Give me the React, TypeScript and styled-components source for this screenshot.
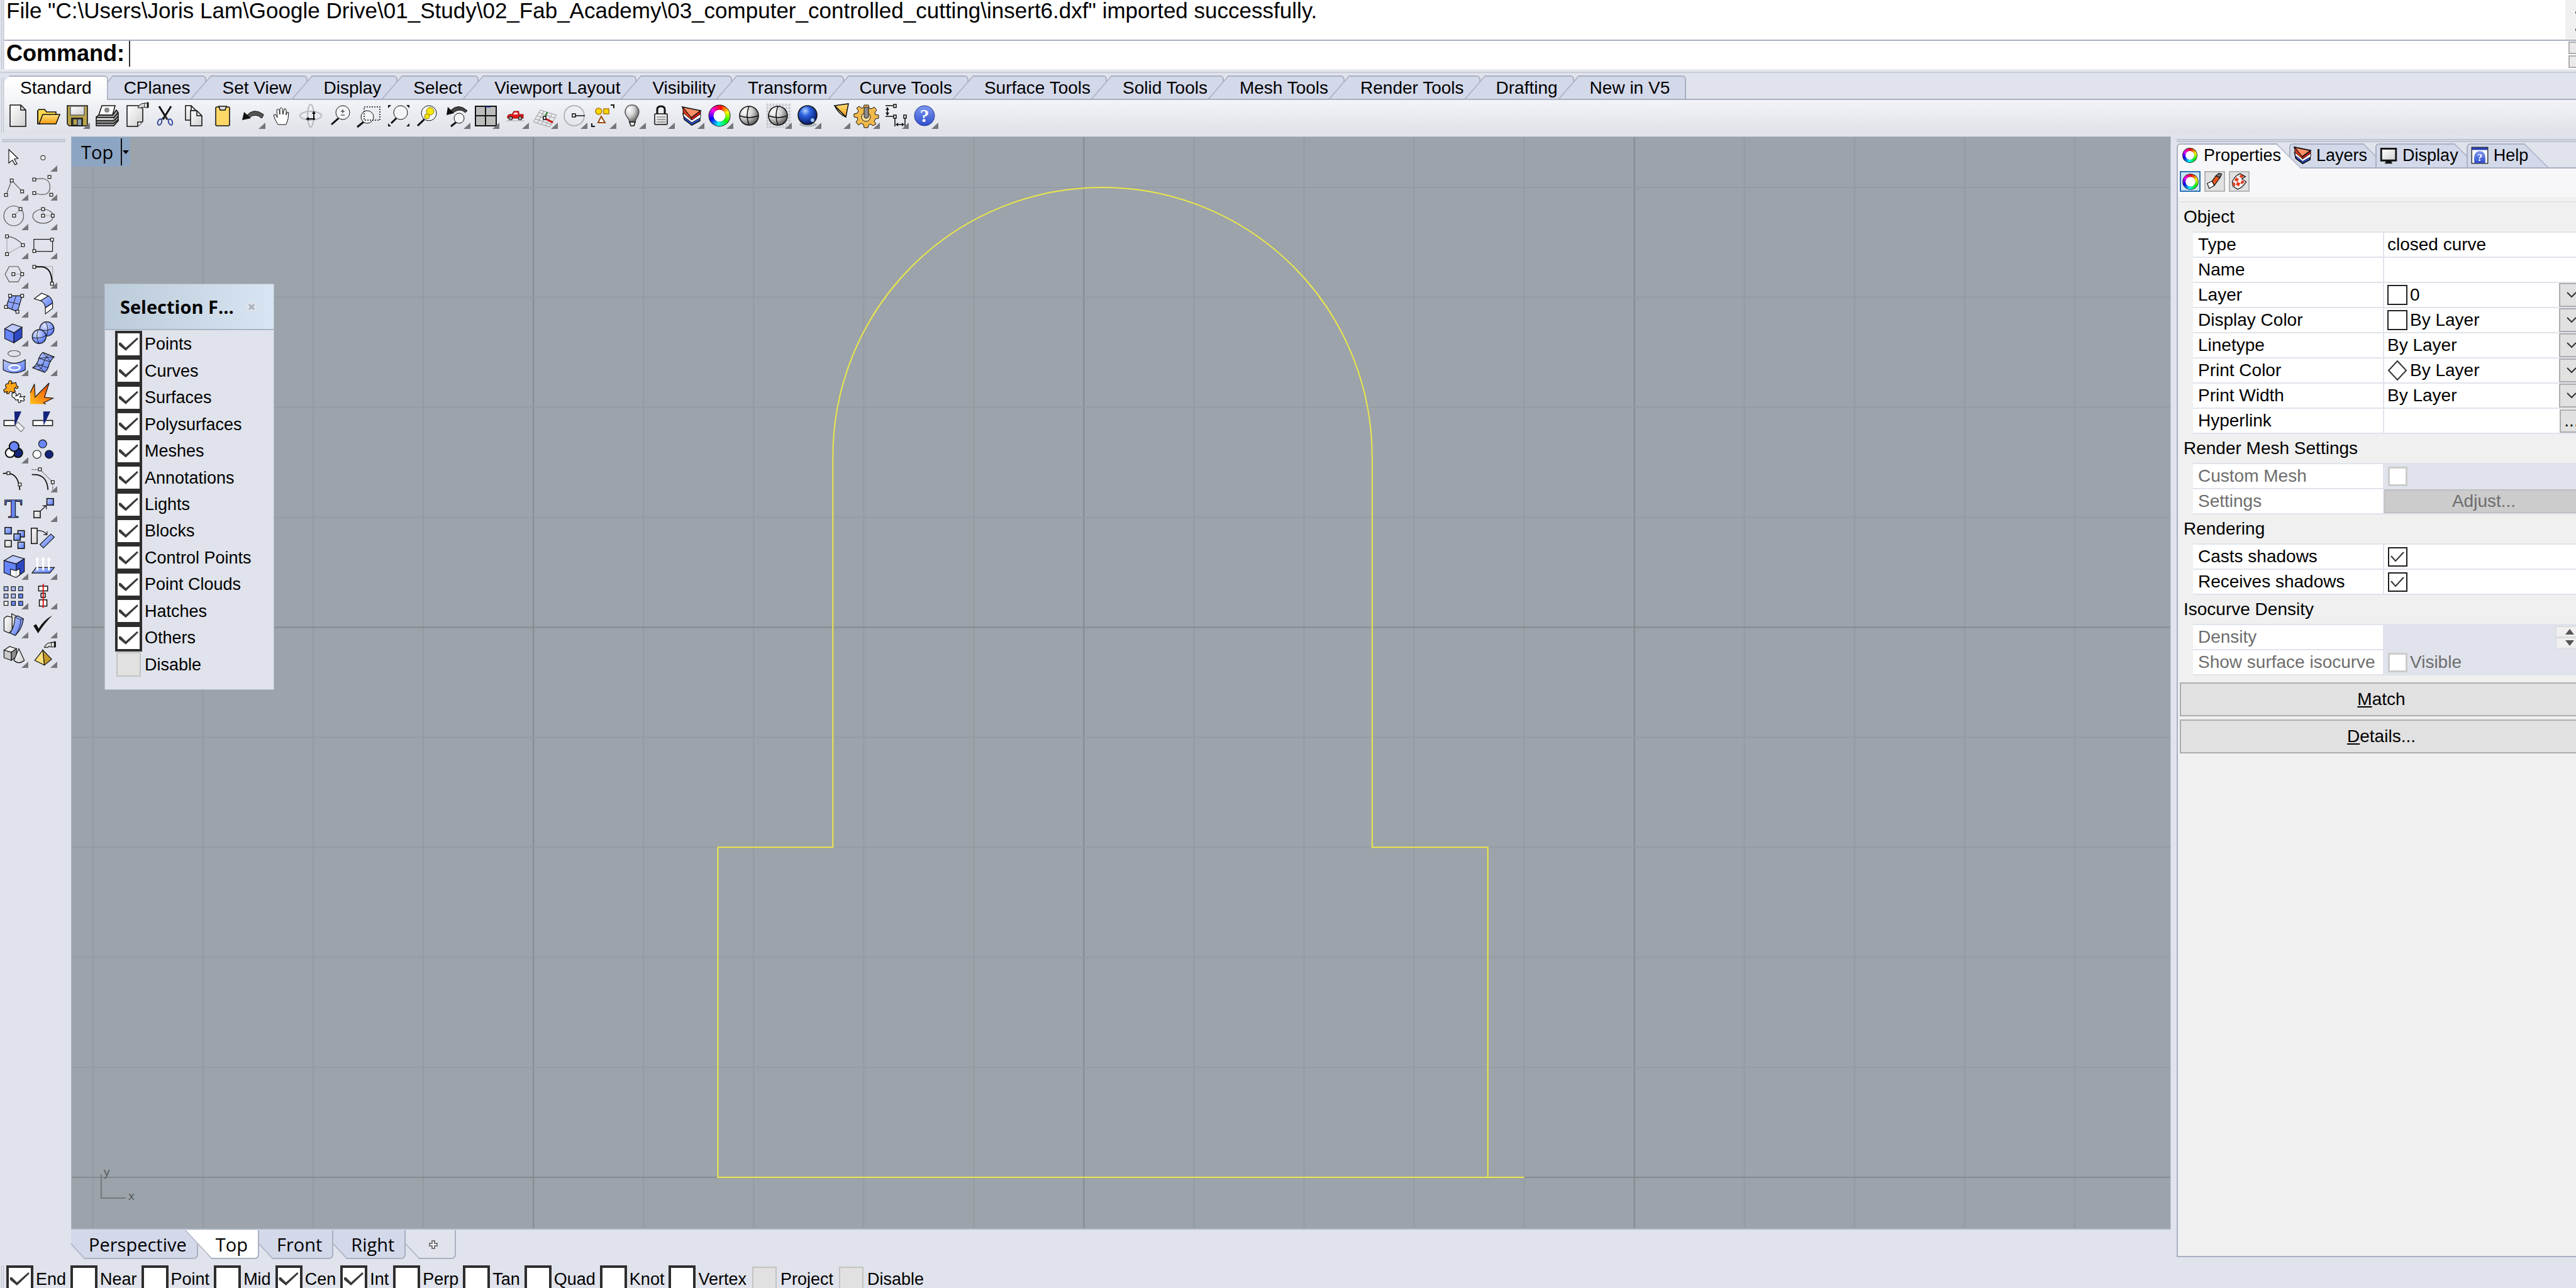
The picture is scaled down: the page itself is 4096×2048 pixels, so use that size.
import React, { ReactNode } from "react";
import styled, { createGlobalStyle, css } from "styled-components";

const color = {
  chrome: "#e0e3eb",
  tab: "#d4d9ea",
  line: "#a9b0c2",
  softLine: "#bcc2cf",
  ink: "#000000",
  muted: "#6d6d6d",
  viewport: "#9ca3aa",
  face: "#e1e1e1",
  blue: "#6a86fb",
  paleBlue: "#b9c7ff",
  navy: "#13247a",
};

const sans = `"Liberation Sans", Arial, sans-serif`;
const ui = `"Open Sans", "Noto Sans", sans-serif`;

const Global = createGlobalStyle`
  *, *::before, *::after { box-sizing: border-box; }
  html, body { margin: 0; height: 100%; overflow: hidden; }
  body { background: ${color.chrome}; font-family: ${sans}; font-size: 27px; line-height: 32px; color: ${color.ink}; }
  #root { height: 100%; }
  button, input, select { font: inherit; color: inherit; margin: 0; padding: 0; border: 0; background: none; border-radius: 0; }
  svg { display: block; }
`;

/* ---------- page frame ---------- */

const Page = styled.div`
  display: flex;
  flex-direction: column;
  height: 100vh;
  overflow: hidden;
`;

const Grip = styled.div<{ $horizontal?: boolean }>`
  flex: none;
  ${(p) =>
    p.$horizontal
      ? css`
          height: 5px;
          margin: 4px 9px 3px 3px;
          border-top: 2px solid ${color.softLine};
          border-bottom: 2px solid ${color.softLine};
        `
      : css`
          width: 4px;
          margin: 0 0 0 2px;
          border-left: 1px solid ${color.softLine};
          border-right: 1px solid ${color.softLine};
        `}
`;

const CommandDock = styled.section`
  flex: none;
  display: flex;
  border-bottom: 0;
`;

const CommandBody = styled.div`
  flex: 1;
  margin-left: 1px;
  background: #fff;
`;

const HistoryRow = styled.div`
  display: flex;
  height: 65px;
  border-bottom: 2px solid ${color.line};
`;

const History = styled.p`
  flex: 1;
  margin: 0;
  padding-left: 3px;
  font-size: 35px;
  line-height: 34px;
  white-space: nowrap;
`;

const ScrollTrack = styled.div`
  width: 17px;
  background: #f0f0f0;
  overflow: hidden;
  padding: 12px 0 0 16px;
`;

const PromptRow = styled.div`
  display: flex;
  height: 45px;
  padding-left: 3px;
`;

const PromptLabel = styled.label`
  font-size: 36px;
  font-weight: bold;
  line-height: 40px;
`;

const Caret = styled.span`
  width: 2px;
  height: 41px;
  margin-left: 7px;
  background: #333;
`;

const PromptInput = styled.input`
  flex: 1;
  outline: none;
  font-size: 36px;
`;

const PromptSpin = styled.div`
  display: grid;
  gap: 2px;
  padding: 1px 0 2px;
`;

const SpinHalf = styled.button`
  width: 12px;
  background: #eaeaea;
  border: 2px solid #adadad;
  border-right: 0;
`;

/* ---------- toolbar tabs ---------- */

const RibbonDock = styled.section`
  flex: none;
  display: flex;
  border-top: 4px solid #e6e8ef;
  margin-bottom: 6px;
  box-shadow: inset 0 2px 0 #c8ccd8;
`;

const RibbonBody = styled.div`
  flex: 1;
  margin-left: 1px;
  padding-top: 6px;
`;

const RibbonGrip = styled(Grip)`
  margin-top: 9px;
`;

const RibbonTabs = styled.div`
  display: flex;
  height: 39px;
  border-bottom: 2px solid ${color.line};
`;

const RibbonTab = styled.button<{ $active?: boolean }>`
  position: relative;
  isolation: isolate;
  height: 37px;
  padding: 2px 26px 0 25px;
  font-size: 28px;
  white-space: nowrap;

  &::before,
  &::after {
    content: "";
    position: absolute;
    z-index: -1;
    top: 0;
    bottom: 0;
    background: ${color.tab};
    border-top: 2px solid ${color.line};
  }
  &::before {
    left: -9px;
    width: 56px;
    border-left: 2px solid ${color.line};
    transform: skewX(-41deg);
  }
  &::after {
    left: 18px;
    right: 0;
    border-right: 2px solid ${color.line};
    border-top-right-radius: 6px;
  }

  ${(p) =>
    p.$active &&
    css`
      z-index: 2;
      height: 39px;
      padding-bottom: 2px;
      clip-path: polygon(8px 0, 100% 0, 100% 100%, 0 100%, 0 10px);
      &::before {
        display: none;
      }
      &::after {
        left: 0;
        background: linear-gradient(#ffffff, #f5f6f9);
      }
    `}
`;

const ToolStrip = styled.div`
  display: flex;
  height: 52px;
  background: linear-gradient(#f3f4f8, #dfe2e8);
`;

const StripGrid = styled.div`
  display: grid;
  grid-template-columns: repeat(32, 1fr);
  width: 1488px;
  margin-left: -2px;
  padding-top: 2px;
`;

const ToolButton = styled.button`
  display: block;
  width: 46px;
  height: 46px;
`;

/* ---------- middle ---------- */

const Middle = styled.main`
  flex: 1;
  min-height: 0;
  display: flex;
`;

const SideTools = styled.aside`
  flex: none;
  width: 113px;
`;

const SideGrid = styled.div`
  display: grid;
  grid-template-columns: 46px 46px;
  grid-auto-rows: 1fr;
  height: 835px;
`;

const ViewColumn = styled.section`
  flex: 1;
  min-width: 0;
  display: flex;
  flex-direction: column;
`;

const Viewport = styled.div`
  position: relative;
  flex: 1;
  min-height: 0;
  overflow: hidden;
  background: ${color.viewport};
  border: 1px solid ${color.line};
  border-right-color: #c5cad8;
  border-bottom-width: 2px;
`;

const Drawing = styled.svg`
  position: absolute;
  left: 0;
  top: 0;
  width: 100%;
  height: 100%;
`;

const ViewTitle = styled.button`
  position: absolute;
  left: 0;
  top: 0;
  display: flex;
  align-items: center;
  height: 47px;
  padding: 0 2px 0 15px;
  background: #8ca5c2;
  font-family: ${ui};
  font-size: 29px;
  line-height: 46px;

  i {
    width: 2px;
    height: 43px;
    margin: 0 1px 0 12px;
    background: #111;
  }
`;

const ViewTabs = styled.nav`
  flex: none;
  display: flex;
  height: 57px;
  padding-top: 1px;
  overflow: hidden;
`;

const ViewTab = styled.button<{ $active?: boolean; $plain?: boolean; $order: number }>`
  position: relative;
  isolation: isolate;
  z-index: ${(p) => (p.$active ? 20 : p.$order)};
  height: 46px;
  padding: 0 18px 0 28px;
  font-family: ${ui};
  font-size: 29px;
  line-height: 46px;
  white-space: nowrap;
  --face: ${(p) => (p.$active ? "#ffffff" : p.$plain ? color.chrome : color.tab)};

  &::before,
  &::after {
    content: "";
    position: absolute;
    z-index: -1;
    top: 0;
    bottom: 0;
    background: var(--face);
    border-bottom: 2px solid ${color.line};
  }
  &::before {
    left: 0;
    width: 46px;
    border-left: 2px solid ${color.line};
    transform: skewX(43deg);
  }
  &::after {
    left: 24px;
    right: 0;
    border-right: 2px solid ${color.line};
    border-bottom-right-radius: 7px;
  }
`;

/* ---------- selection filter ---------- */

const FilterWindow = styled.section`
  position: absolute;
  left: 52px;
  top: 233px;
  width: 270px;
  padding-bottom: 18px;
  background: ${color.chrome};
  border: 1px solid #b4bccb;
`;

const FilterTitle = styled.header`
  display: flex;
  align-items: center;
  justify-content: space-between;
  height: 73px;
  padding: 0 26px 0 24px;
  background: linear-gradient(90deg, #bccbd9, #d8e5f2);
  border-bottom: 2px solid #a9b5c4;

  h2 {
    margin: 0;
    font: bold 29px/74px ${ui};
    white-space: nowrap;
  }
`;

const FilterList = styled.div`
  display: grid;
  grid-auto-rows: minmax(0, 1fr);
  height: 553px;
  padding: 1px 0 0 16px;
`;

const CheckLabel = styled.label`
  display: flex;
  align-items: center;
  gap: 4px;
  white-space: nowrap;
`;

const BoldCheck = styled.input<{ $flat?: boolean }>`
  appearance: none;
  flex: none;
  width: 43px;
  height: 43px;
  background: #fff;
  border: 4px solid #2e2e2e;

  &:checked::before {
    content: "";
    display: block;
    width: 35px;
    height: 35px;
    background: #3a3a3a;
    clip-path: polygon(2px 15px, 5px 15px, 13px 23px, 31px 7px, 33px 9px, 13px 28px, 2px 19px);
  }

  ${(p) =>
    p.$flat &&
    css`
      width: 39px;
      height: 39px;
      margin: 2px;
      background: ${color.face};
      border: 2px solid #c3c3c3;
    `}
`;

/* ---------- properties panel ---------- */

const Panel = styled.aside`
  flex: none;
  width: 635px;
  margin: 4px 0 13px 9px;
  display: flex;
  flex-direction: column;
  overflow: hidden;
`;

const PanelGrip = styled(Grip)`
  margin: 0 0 2px;
`;

const PanelTabs = styled.div`
  display: flex;
  flex: none;
  height: 40px;
  border-bottom: 2px solid ${color.line};
`;

const PanelTab = styled.button<{ $active?: boolean }>`
  position: relative;
  isolation: isolate;
  z-index: ${(p) => (p.$active ? 3 : 0)};
  display: flex;
  align-items: center;
  gap: 8px;
  height: ${(p) => (p.$active ? 40 : 38)}px;
  padding: 0 13px ${(p) => (p.$active ? 3 : 1)}px 7px;
  --face: ${(p) => (p.$active ? "#f7f7f9" : color.tab)};

  &::before,
  &::after {
    content: "";
    position: absolute;
    z-index: -1;
    top: 0;
    bottom: 0;
    background: var(--face);
    border-top: 2px solid ${color.line};
  }
  &::before {
    left: 0;
    right: 19px;
    border-left: 2px solid ${color.line};
    border-top-left-radius: 6px;
  }
  &::after {
    right: 0;
    width: 46px;
    border-right: 2px solid ${color.line};
    transform: skewX(45deg);
  }
`;

const PanelBody = styled.div`
  flex: 1;
  background: #f0f0f0;
  border-left: 2px solid ${color.line};
  border-bottom: 2px solid ${color.line};
`;

const PageButtons = styled.div`
  display: flex;
  gap: 6px;
  height: 45px;
  padding: 4px 0 0 3px;
  background: #f7f7f9;
`;

const PageButton = styled.button<{ $on?: boolean }>`
  display: grid;
  place-items: center;
  width: 33px;
  height: 33px;
  background: ${(p) => (p.$on ? "#cce4f7" : color.face)};
  border: 2px solid ${(p) => (p.$on ? "#2a6fb5" : "#b4b4b4")};
`;

const Sheet = styled.div`
  width: 645px;
  padding: 7px 0 0 2px;
`;

const Table = styled.table`
  width: 100%;
  border-collapse: collapse;
  table-layout: fixed;
  border-top: 2px solid ${color.chrome};
  font-size: 28px;
`;

const GroupHead = styled.th`
  height: 48px;
  padding: 0 0 0 7px;
  font-weight: normal;
  text-align: left;
`;

const Gutter = styled.td`
  width: 22px;
  padding: 0;
  background: #f0f0f0;
`;

const Name = styled.th<{ $off?: boolean }>`
  width: 303px;
  height: 40px;
  padding: 0 0 0 8px;
  background: #fff;
  border: 2px solid ${color.chrome};
  border-left: 0;
  color: ${(p) => (p.$off ? color.muted : color.ink)};
  font-weight: normal;
  text-align: left;
  white-space: nowrap;
`;

const Value = styled.td<{ $off?: boolean }>`
  padding: 0;
  background: ${(p) => (p.$off ? color.chrome : "#fff")};
  border: 2px solid ${color.chrome};
  border-right: 0;
  color: ${(p) => (p.$off ? color.muted : color.ink)};
`;

const ValueLine = styled.div`
  display: flex;
  align-items: center;
  gap: 4px;
  height: 38px;
  padding-left: 5px;
`;

const Swatch = styled.span`
  flex: none;
  width: 32px;
  height: 32px;
  background: #fff;
  border: 2px solid #222;
`;

const Select = styled.select`
  appearance: none;
  flex: 1;
  min-width: 0;
  height: 38px;
  outline: none;
`;

const DropFace = styled.span`
  display: grid;
  place-items: center;
  flex: none;
  width: 39px;
  height: 38px;
  background: ${color.face};
  border: 2px solid #adadad;
  pointer-events: none;
`;

const TextBox = styled.input`
  flex: 1;
  min-width: 0;
  height: 36px;
  outline: none;
`;

const MoreButton = styled.button`
  flex: none;
  width: 38px;
  height: 37px;
  background: ${color.face};
  border: 2px solid #adadad;
  line-height: 30px;
`;

const SmallCheck = styled.input`
  appearance: none;
  flex: none;
  width: 31px;
  height: 31px;
  margin-left: 1px;
  background: #fff;
  border: 2px solid #1c1c1c;

  &:disabled {
    border: 3px solid #cccccc;
  }
  &:checked::before {
    content: "";
    display: block;
    width: 27px;
    height: 27px;
    background: #333;
    clip-path: polygon(2px 13px, 4px 12px, 10px 19px, 22px 6px, 24px 7px, 10px 22px);
  }
`;

const AdjustButton = styled.button`
  display: block;
  width: 100%;
  height: 38px;
  background: #cccccc;
  border: 2px solid #bfbfbf;
`;

const Stepper = styled.div`
  display: grid;
  gap: 1px;
  width: 44px;
  margin-left: auto;
`;

const Step = styled.button`
  display: grid;
  place-items: center;
  height: 17px;
  background: #f0f0f0;
  border: 1px solid #d8d8d8;
`;

const WideButton = styled.button`
  display: block;
  width: 641px;
  height: 54px;
  margin: 0 0 5px 1px;
  background: ${color.face};
  border: 2px solid #adadad;
  font-size: 28px;
`;

const ButtonStack = styled.div`
  padding-top: 11px;
`;

/* ---------- object snaps ---------- */

const SnapBar = styled.footer`
  flex: none;
  display: flex;
  height: 36px;
`;

const SnapList = styled.div`
  display: flex;
  gap: 7px;
  height: 43px;
  padding-left: 4px;
`;

/* ---------- drawings ---------- */

const Corner = ({ size }: { size: number }) => {
  const k = size / 46;
  return <path d={`M${45 * k} ${34 * k}V${44 * k}H${34 * k}Z`} fill="#747679" />;
};

const Art = ({ size, box, menu, children }: { size: number; box: number; menu?: boolean; children: ReactNode }) => (
  <svg width={size} height={size} viewBox={`0 0 ${box} ${box}`} fill="none" stroke="#111" strokeWidth={box / 30} aria-hidden>
    {children}
    {menu && (
      <g stroke="none">
        <Corner size={box} />
      </g>
    )}
  </svg>
);

const Defs = styled.svg`
  position: absolute;
  width: 0;
  height: 0;
`;

const Gradients = () => (
  <Defs aria-hidden>
    <defs>
      <linearGradient id="paper" x1="0" y1="0" x2="1" y2="1">
        <stop offset="0" stopColor="#fff" />
        <stop offset="1" stopColor="#cfcfcf" />
      </linearGradient>
      <linearGradient id="gold" x1="0" y1="0" x2="0" y2="1">
        <stop offset="0" stopColor="#ffe27a" />
        <stop offset="1" stopColor="#f39a12" />
      </linearGradient>
      <linearGradient id="azure" x1="0" y1="0" x2="1" y2="1">
        <stop offset="0" stopColor="#c3d0ff" />
        <stop offset="1" stopColor="#5475f4" />
      </linearGradient>
      <linearGradient id="fire" x1="1" y1="0" x2="0" y2="1">
        <stop offset="0" stopColor="#f03a0c" />
        <stop offset="1" stopColor="#ffc21a" />
      </linearGradient>
      <linearGradient id="query" x1="0" y1="0" x2="0" y2="1">
        <stop offset="0" stopColor="#7d98f2" />
        <stop offset="1" stopColor="#2f4fcc" />
      </linearGradient>
      <radialGradient id="steel" cx="30%" cy="28%" r="85%">
        <stop offset="0" stopColor="#ffffff" />
        <stop offset="0.45" stopColor="#cfcfcf" />
        <stop offset="1" stopColor="#444" />
      </radialGradient>
      <radialGradient id="ocean" cx="38%" cy="28%" r="75%">
        <stop offset="0" stopColor="#b8d4ff" />
        <stop offset="0.35" stopColor="#2b62e0" />
        <stop offset="1" stopColor="#04135e" />
      </radialGradient>
      <radialGradient id="ball" cx="35%" cy="30%" r="75%">
        <stop offset="0" stopColor="#dfe6ff" />
        <stop offset="1" stopColor="#4d6ff0" />
      </radialGradient>
    </defs>
  </Defs>
);

const Wheel = ({ cx = 23, cy = 23, r = 13, w = 7 }: { cx?: number; cy?: number; r?: number; w?: number }) => {
  const n = 24;
  const at = (i: number) => {
    const a = (i / n) * Math.PI * 2 - Math.PI / 2;
    return `${(cx + r * Math.cos(a)).toFixed(2)} ${(cy + r * Math.sin(a)).toFixed(2)}`;
  };
  return (
    <g strokeWidth={w}>
      <circle cx={cx} cy={cy} r={r} strokeWidth={w + 2} stroke="#222" />
      {Array.from({ length: n }, (_, i) => (
        <path key={i} d={`M${at(i)}A${r} ${r} 0 0 1 ${at(i + 1.1)}`} stroke={`hsl(${i * 15} 95% 50%)`} />
      ))}
      <circle cx={cx} cy={cy} r={r - w / 2} fill="#fff" stroke="none" />
    </g>
  );
};

const LayerStack = () => (
  <>
    <path d="M11 20L13 29L25 38L38 31V24L25 31Z" fill="#2a4fd0" />
    <path d="M11 15L12 24L25 34L39 26V20L25 28Z" fill="#fff" strokeWidth={1} />
    <path d="M24 26L39 15V20L25 30Z" fill="#d81818" strokeWidth={1} />
    <path d="M10 9L39 15L24 26Z" fill="#ff8f66" />
    <path d="M10 9L12 19L25 30L24 26Z" fill="#e5381c" strokeWidth={1} />
  </>
);

const Lens = ({ x, y, r, hx, hy }: { x: number; y: number; r: number; hx: number; hy: number }) => (
  <>
    <path d={`M${x - r * 0.6} ${y + r * 0.8}L${hx} ${hy}`} strokeWidth={3} />
    <circle cx={x} cy={y} r={r} fill="#f4f5f8" strokeWidth={1} />
  </>
);

const Page46 = ({ x = 11, y = 6, w = 25, h = 34 }) => (
  <>
    <path d={`M${x} ${y}H${x + w - 8}L${x + w} ${y + 8}V${y + h}H${x}Z`} fill="url(#paper)" />
    <path d={`M${x + w - 8} ${y}V${y + 8}H${x + w}`} />
  </>
);

const Sphere = () => (
  <>
    <circle cx="23" cy="23" r="15" fill="url(#steel)" />
    <path d="M23 8Q17 22 23 38M8 23Q23 29 38 23" />
  </>
);

const Question = ({ size = 30, x = 23, y = 33 }) => (
  <text x={x} y={y} fontFamily="Liberation Serif, serif" fontWeight="bold" fontSize={size} textAnchor="middle" fill="#fff" stroke="none">
    ?
  </text>
);

const Fist = ({ x = 0, y = 0, k = 1 }) => (
  <g transform={`translate(${x} ${y}) scale(${k})`} strokeWidth={1}>
    <path d="M0 8L3 4L6 2L12 1V7L9 8L7 7L5 9L3 8L1 9Z" fill="#ddd" />
    <path d="M11 1H16V8H11Z" fill="#fff" />
    <path d="M15 0H17V8H15Z" fill="#111" />
  </g>
);

type Tool = { name: string; menu?: boolean; art: ReactNode };

const stripTools: Tool[] = [
  { name: "New", art: <Page46 /> },
  {
    name: "Open",
    art: (
      <>
        <path d="M8 35V15L10 13H19L22 17H37V21" fill="#ffd84a" />
        <path d="M10 36L16 21H43L37 36Z" fill="url(#gold)" />
        <path d="M8 15V36H12" />
      </>
    ),
  },
  {
    name: "Save",
    menu: true,
    art: (
      <>
        <path d="M9 7H41V39H12L9 36Z" fill="#b9a54c" />
        <rect x="14" y="8" width="22" height="14" fill="url(#paper)" stroke="#666" />
        <rect x="16" y="27" width="17" height="12" fill="#444" />
        <rect x="19" y="29" width="5" height="8" fill="#b9a54c" stroke="none" />
        <path d="M26 29V38H31V29Z" fill="#8ea0b4" stroke="none" />
      </>
    ),
  },
  {
    name: "Print",
    art: (
      <>
        <path d="M17 7H38L34 22H12Z" fill="#fff" />
        <circle cx="25" cy="14" r="4" fill="#888" stroke="none" />
        <path d="M12 22H34L40 14L43 18V31L36 39H8V25Z" fill="#9a9a9a" />
        <path d="M8 26H36L43 18M8 31H36L43 24M8 35H36L43 29" />
        <path d="M9 28H35" stroke="#eee" strokeWidth={2} />
      </>
    ),
  },
  {
    name: "Document properties",
    art: (
      <>
        <path d="M11 7H30L36 12V32L28 40H11Z" fill="url(#paper)" />
        <path d="M28 40V33H35" fill="#fff" />
        <Fist x={28} y={2} />
      </>
    ),
  },
  {
    name: "Cut",
    art: (
      <>
        <path d="M15 8L28 29M34 8L21 29" strokeWidth={3} />
        <path d="M23 24L18 30M24 24L30 30" stroke="#334" />
        <ellipse cx="16" cy="33" rx="3" ry="5" transform="rotate(20 16 33)" stroke="#36489a" strokeWidth={2} />
        <ellipse cx="33" cy="33" rx="3" ry="5" transform="rotate(-20 33 33)" stroke="#36489a" strokeWidth={2} />
      </>
    ),
  },
  {
    name: "Copy",
    art: (
      <>
        <Page46 x={11} y={7} w={17} h={23} />
        <Page46 x={19} y={15} w={18} h={24} />
      </>
    ),
  },
  {
    name: "Paste",
    art: (
      <>
        <rect x="12" y="9" width="22" height="30" rx="2" fill="#ffd766" />
        <path d="M17 8H29L27 14H19Z" fill="#ddd" />
      </>
    ),
  },
  {
    name: "Undo",
    menu: true,
    art: (
      <>
        <path d="M14 24Q26 9 42 21Q41 25 39 27Q30 18 19 26Z" fill="#555" strokeWidth={1} />
        <path d="M8 30L11 17L22 27Z" fill="#111" stroke="none" />
      </>
    ),
  },
  {
    name: "Pan",
    art: (
      <path
        d="M18 37L13 28L11 22L14 21L17 26L16 14L18 12L20 14L21 21V12L23 10L25 12L26 21L28 12L30 12L31 14V22L33 17L35 18L34 28L31 37Z"
        fill="#fff"
        strokeWidth={1}
      />
    ),
  },
  {
    name: "Rotate view",
    art: (
      <>
        <ellipse cx="24" cy="23" rx="17" ry="7" stroke="#b5b9c0" strokeWidth={2} />
        <ellipse cx="24" cy="23" rx="5" ry="18" stroke="#b5b9c0" strokeWidth={2} />
        <path d="M29 17V30M19 28H31" strokeWidth={2} />
        <path d="M26 20L29 15L32 20ZM21 25L16 28L21 31Z" fill="#111" stroke="none" />
      </>
    ),
  },
  {
    name: "Zoom dynamic",
    art: (
      <>
        <Lens x={28} y={18} r={11} hx={10} hy={37} />
        <path d="M25 16H31M28 13V19M25 22H31" strokeWidth={1} />
      </>
    ),
  },
  {
    name: "Zoom window",
    art: (
      <>
        <Lens x={21} y={25} r={10} hx={5} hy={41} />
        <rect x="16" y="9" width="25" height="21" strokeDasharray="2 2" />
      </>
    ),
  },
  {
    name: "Zoom extents",
    art: (
      <>
        <Lens x={27} y={18} r={11} hx={12} hy={35} />
        <path d="M7 6H12L7 11ZM41 6H36L41 11ZM7 40H12L7 35ZM41 40H36L41 35Z" fill="#111" stroke="none" />
      </>
    ),
  },
  {
    name: "Zoom selected",
    art: (
      <>
        <Lens x={26} y={19} r={12} hx={8} hy={39} />
        <circle cx="28" cy="16" r="6" fill="#f7e60a" stroke="#8a7d00" strokeWidth={1} />
        <circle cx="23" cy="24" r="4" fill="#f7e60a" stroke="#8a7d00" strokeWidth={1} />
      </>
    ),
  },
  {
    name: "Undo view change",
    menu: true,
    art: (
      <>
        <path d="M13 15Q26 2 40 15L37 18Q28 10 18 18Z" fill="#444" strokeWidth={1} />
        <path d="M7 22L9 9L19 19Z" fill="#111" stroke="none" />
        <Lens x={27} y={27} r={8} hx={14} hy={40} />
      </>
    ),
  },
  {
    name: "Four viewports",
    menu: true,
    art: (
      <>
        <rect x="7" y="8" width="33" height="31" fill="#bcbcbc" strokeWidth={2} />
        <path d="M23 8V39M7 23H40" strokeWidth={2} />
        <path d="M23 9H31" stroke="#1a2a9c" />
      </>
    ),
  },
  {
    name: "Named view",
    menu: true,
    art: (
      <>
        <path d="M11 24Q12 20 18 21L21 16H29V21H36V27H11Z" fill="#e01b1b" stroke="#8c0b0b" strokeWidth={1} />
        <path d="M22 18H27V21H20Z" fill="#fff" stroke="none" />
        <circle cx="16" cy="27" r="3" fill="#999" strokeWidth={1} />
        <circle cx="31" cy="27" r="3" fill="#999" strokeWidth={1} />
        <path d="M9 31H38" stroke="#bbb" />
      </>
    ),
  },
  {
    name: "Construction plane",
    menu: true,
    art: (
      <>
        <path
          d="M17 14L43 22M15 18L41 27M12 23L38 32M9 28L35 37M6 33L32 41M17 14L6 33M23 16L12 35M29 18L19 37M36 20L25 39M43 22L32 41"
          stroke="#9a9a9a"
          strokeWidth={1}
        />
        <path d="M24 27L37 34" stroke="#d01515" strokeWidth={3} />
        <path d="M24 27L28 17" stroke="#188018" strokeWidth={2} />
        <rect x="22" y="24" width="4" height="5" fill="#fff" />
      </>
    ),
  },
  {
    name: "Set view",
    menu: true,
    art: (
      <>
        <circle cx="24" cy="23" r="16" stroke="#b3b6bb" strokeWidth={2} />
        <path d="M24 23H41" />
        <rect x="21" y="20" width="5" height="5" fill="#fff" />
      </>
    ),
  },
  {
    name: "Select",
    menu: true,
    art: (
      <>
        <circle cx="17" cy="16" r="5" fill="#ffd800" stroke="#b07a00" />
        <rect x="25" y="12" width="8" height="8" fill="#ffd800" stroke="#b07a00" />
        <path d="M21 24L16 34H27Z" fill="#fff" stroke="#9a4a10" strokeWidth={2} />
        <path d="M36 6H41V11M6 35V40H11" strokeWidth={2} />
      </>
    ),
  },
  {
    name: "Hide",
    menu: true,
    art: (
      <>
        <path d="M23 6C31 6 34 12 34 17C34 24 29 26 28 33H19C18 26 12 24 12 17C12 12 15 6 23 6Z" fill="url(#steel)" stroke="#555" />
        <path d="M19 33H28L26 39H21Z" fill="#eee" />
      </>
    ),
  },
  {
    name: "Lock",
    menu: true,
    art: (
      <>
        <path d="M17 20V13Q17 8 23 8Q29 8 29 13V20" strokeWidth={3} />
        <rect x="13" y="20" width="20" height="17" rx="1" fill="url(#paper)" />
        <path d="M16 25H30M16 29H30M16 33H30" stroke="#888" />
      </>
    ),
  },
  { name: "Layers", menu: true, art: <LayerStack /> },
  { name: "Properties", menu: true, art: <Wheel /> },
  { name: "Shade", art: <Sphere /> },
  {
    name: "Shaded viewport",
    menu: true,
    art: (
      <>
        <path
          d="M6 3V42M11 3V42M16 3V42M21 3V42M26 3V42M31 3V42M36 3V42M41 3V42M4 6H44M4 11H44M4 16H44M4 21H44M4 26H44M4 31H44M4 36H44M4 41H44"
          stroke="#b9bcc2"
          strokeWidth={1}
        />
        <Sphere />
      </>
    ),
  },
  {
    name: "Render",
    menu: true,
    art: (
      <>
        <ellipse cx="24" cy="37" rx="14" ry="4" fill="#b5b9c2" stroke="none" />
        <circle cx="23" cy="22" r="15" fill="url(#ocean)" />
        <circle cx="31" cy="30" r="3" fill="#9cc4ff" stroke="none" />
      </>
    ),
  },
  {
    name: "Spotlight",
    menu: true,
    art: (
      <>
        <path d="M20 7L42 4L38 25Z" fill="url(#gold)" />
        <path d="M20 7L38 25Q27 21 20 7Z" fill="#ffe9b0" />
      </>
    ),
  },
  {
    name: "Options",
    menu: true,
    art: (
      <>
        <path
          d="M20 6H27L28 11L32 12L36 9L40 14L37 18L38 21L43 22V27L38 28L36 32L39 36L34 39L30 36L27 38L26 42H20L19 37L15 35L11 38L7 33L10 29L9 26L4 25V20L9 19L11 15L8 11L12 8L16 11L19 10Z"
          fill="#f0b94c"
          strokeWidth={1}
        />
        <circle cx="23" cy="25" r="7" fill="#ffe2a0" strokeWidth={1} />
        <rect x="20" y="9" width="7" height="18" rx="3" fill="#8c8c8c" strokeWidth={1} />
      </>
    ),
  },
  {
    name: "Dimension",
    menu: true,
    art: (
      <>
        <path d="M8 7H22M8 24H22M23 25V40M39 25V40M11 11V21" />
        <path d="M8 14L11 9L14 14ZM8 18L11 23L14 18ZM28 34L24 37L28 40ZM34 34L38 37L34 40Z" fill="#111" stroke="none" />
        <path d="M26 37H36" />
        <rect x="21" y="5" width="4" height="5" fill="#fff" />
        <rect x="21" y="22" width="4" height="5" fill="#fff" />
        <rect x="37" y="22" width="4" height="5" fill="#fff" />
      </>
    ),
  },
  {
    name: "Help",
    menu: true,
    art: (
      <>
        <circle cx="23" cy="23" r="16" fill="url(#query)" stroke="#27348b" strokeWidth={1} />
        <Question />
      </>
    ),
  },
];

const Dots = ({ at }: { at: [number, number][] }) => (
  <>
    {at.map(([x, y]) => (
      <rect key={`${x}-${y}`} x={x - 8} y={y - 8} width="16" height="16" fill="#fff" stroke="#111" strokeWidth={4} />
    ))}
  </>
);

const soft = { stroke: "#a5a8ad", strokeWidth: 4 };
const thin = { stroke: "#555", strokeWidth: 4 };

const sideTools: Tool[] = [
  { name: "Cancel", art: <path d="M48 30L98 78L78 82L93 108L82 113L68 88L48 104Z" fill="#fff" strokeWidth={4} /> },
  { name: "Point", menu: true, art: <circle cx="77" cy="75" r="12" fill="#fff" stroke="#333" strokeWidth={4} /> },
  {
    name: "Polyline",
    menu: true,
    art: (
      <>
        <path d="M33 120L64 41L121 101" {...thin} />
        <Dots at={[[64, 41], [33, 120], [121, 101]]} />
      </>
    ),
  },
  {
    name: "Curve",
    menu: true,
    art: (
      <>
        <path d="M29 36C60 28 115 22 115 75S70 122 29 110" {...thin} />
        <Dots at={[[29, 36], [112, 22], [29, 110], [122, 119]]} />
      </>
    ),
  },
  {
    name: "Circle",
    menu: true,
    art: (
      <>
        <circle cx="75" cy="73" r="54" {...thin} />
        <path d="M77 72L112 36" {...soft} />
        <Dots at={[[77, 72], [112, 36]]} />
      </>
    ),
  },
  {
    name: "Ellipse",
    menu: true,
    art: (
      <>
        <ellipse cx="77" cy="75" rx="56" ry="38" {...thin} />
        <path d="M77 36V72H130" {...soft} />
        <Dots at={[[77, 36], [77, 72], [130, 72]]} />
      </>
    ),
  },
  {
    name: "Arc",
    menu: true,
    art: (
      <>
        <path d="M38 27V124L125 75" {...soft} />
        <path d="M38 27Q90 30 125 75" {...thin} />
        <Dots at={[[38, 27], [125, 75], [38, 124]]} />
      </>
    ),
  },
  {
    name: "Rectangle",
    menu: true,
    art: (
      <>
        <rect x="27" y="43" width="102" height="66" strokeWidth={4} />
        <Dots at={[[126, 45], [29, 107]]} />
      </>
    ),
  },
  {
    name: "Polygon",
    menu: true,
    art: (
      <>
        <path d="M28 72L50 30H99L121 72L99 114H50Z" {...thin} />
        <path d="M73 72H121" {...soft} />
        <Dots at={[[73, 72], [121, 72]]} />
      </>
    ),
  },
  {
    name: "Fillet",
    menu: true,
    art: (
      <>
        <path d="M29 30H129V124" {...soft} />
        <path d="M29 32H72Q126 38 126 124" strokeWidth={7} />
        <Dots at={[[29, 32], [126, 124]]} />
      </>
    ),
  },
  {
    name: "Surface from points",
    menu: true,
    art: (
      <>
        <path d="M55 32H121L95 119L33 93Z" fill="#8da4fb" strokeWidth={4} />
        <path d="M88 32L64 106M44 64L108 78" strokeWidth={3} />
        <Dots at={[[55, 32], [121, 32], [95, 119], [33, 93]]} />
      </>
    ),
  },
  {
    name: "Blend surface",
    menu: true,
    art: (
      <>
        <path d="M29 48L69 18L107 33L64 59Z" fill="#fff" strokeWidth={4} />
        <path d="M64 59L107 33Q130 50 129 72L90 98Q88 70 64 59Z" fill="url(#azure)" strokeWidth={4} />
        <path d="M129 72V100L90 131V98Z" fill="#fff" strokeWidth={4} />
      </>
    ),
  },
  {
    name: "Box",
    menu: true,
    art: (
      <>
        <path d="M26 54L68 28L120 46L76 76Z" fill="#bccaff" strokeWidth={4} />
        <path d="M26 54L76 76V131L26 108Z" fill="#6583fc" strokeWidth={4} />
        <path d="M76 76L120 46V102L76 131Z" fill="#2e49c4" strokeWidth={4} />
      </>
    ),
  },
  {
    name: "Boolean union",
    menu: true,
    art: (
      <>
        <circle cx="98" cy="55" r="39" fill="url(#ball)" strokeWidth={4} />
        <path d="M61 60Q98 70 136 50M92 17Q112 55 96 93" strokeWidth={3} />
        <circle cx="56" cy="97" r="38" fill="url(#ball)" strokeWidth={4} />
        <path d="M19 102Q56 112 93 92M50 60Q36 97 54 134" strokeWidth={3} />
      </>
    ),
  },
  {
    name: "Project curve",
    menu: true,
    art: (
      <>
        <ellipse cx="77" cy="28" rx="34" ry="16" {...thin} />
        <path d="M18 62Q77 100 138 62V118Q77 150 18 118Z" fill="url(#azure)" strokeWidth={4} />
        <ellipse cx="79" cy="105" rx="30" ry="14" stroke="#fff" strokeWidth={8} />
      </>
    ),
  },
  {
    name: "Mesh",
    menu: true,
    art: (
      <>
        <path d="M76 22L138 46Q112 70 108 96Q102 118 86 131L20 106Q46 86 52 62Q58 38 76 22Z" fill="url(#azure)" strokeWidth={4} />
        <path d="M107 34Q82 60 78 86Q72 108 53 119M54 54L120 74M42 84L104 106M76 22L120 74M54 54L138 46M42 84L86 131M78 86L20 106" strokeWidth={3} />
      </>
    ),
  },
  {
    name: "Join",
    art: (
      <>
        <path d="M66 90Q78 78 86 88Q94 96 84 102L98 98Q100 84 112 92Q116 104 106 108L136 104L128 116Q138 124 128 130L112 126Q116 138 104 138Q96 132 100 122L86 124L78 112Q62 110 66 90Z" fill="#fff" strokeWidth={4} />
        <path d="M34 36L46 34Q44 18 58 18Q70 24 62 34L86 28L92 48Q104 48 96 60Q88 62 84 54L78 66L84 78L66 82Q58 70 52 80Q52 92 36 88L40 78L24 82L20 68Q34 64 34 54Q26 48 34 36Z" fill="#ffa71a" strokeWidth={4} />
      </>
    ),
  },
  {
    name: "Explode",
    art: (
      <>
        <path d="M7 84L30 36L34 108L110 31L85 109L132 114L80 139L92 146H7Z" fill="url(#fire)" stroke="none" />
        <path d="M7 84L30 36L34 108L110 31L85 109L132 114L80 139L92 146" strokeWidth={4} />
      </>
    ),
  },
  {
    name: "Trim",
    art: (
      <>
        <rect x="22" y="74" width="60" height="28" fill="#fff" />
        <path d="M98 83L133 116L115 136L82 101Z" fill="#eef0f5" stroke="#777" strokeWidth={4} />
        <path d="M78 25H117L82 102Z" fill={color.navy} stroke="none" />
      </>
    ),
  },
  {
    name: "Split",
    art: (
      <>
        <rect x="22" y="74" width="107" height="28" fill="#fff" />
        <path d="M78 25H117L80 102Z" fill={color.navy} stroke="none" />
      </>
    ),
  },
  {
    name: "Group",
    menu: true,
    art: (
      <g strokeWidth={7}>
        <circle cx="98" cy="93" r="25" fill={color.navy} />
        <circle cx="55" cy="93" r="25" fill="#fff" />
        <circle cx="77" cy="58" r="26" fill={color.blue} />
      </g>
    ),
  },
  {
    name: "Ungroup",
    art: (
      <g strokeWidth={4}>
        <circle cx="75" cy="44" r="22" fill={color.blue} />
        <circle cx="44" cy="101" r="22" fill="#fff" />
        <circle cx="110" cy="101" r="22" fill={color.navy} />
      </g>
    ),
  },
  {
    name: "Edit points",
    art: (
      <>
        <path d="M16 48Q100 32 108 138" strokeWidth={6} />
        <Dots at={[[46, 46], [108, 108]]} />
      </>
    ),
  },
  {
    name: "Control points",
    menu: true,
    art: (
      <>
        <path d="M16 54Q98 46 104 137" strokeWidth={6} />
        <path d="M16 26H60L130 95V140" strokeWidth={4} strokeDasharray="4 5" />
        <Dots at={[[60, 25], [130, 95]]} />
      </>
    ),
  },
  {
    name: "Text",
    art: (
      <text x="73" y="128" fontFamily="Liberation Serif, serif" fontWeight="bold" fontSize="146" textAnchor="middle" fill={color.blue} strokeWidth={4}>
        T
      </text>
    ),
  },
  {
    name: "Move",
    menu: true,
    art: (
      <>
        <rect x="27" y="92" width="35" height="36" fill="url(#paper)" />
        <rect x="98" y="23" width="36" height="36" fill="url(#azure)" />
        <path d="M64 90L94 62M74 62H95V82" strokeWidth={4} />
      </>
    ),
  },
  {
    name: "Copy objects",
    art: (
      <>
        <rect x="27" y="23" width="35" height="35" fill="url(#azure)" />
        <rect x="98" y="40" width="35" height="35" fill="url(#azure)" />
        <rect x="76" y="58" width="35" height="35" fill="url(#azure)" />
        <rect x="27" y="94" width="35" height="35" fill="url(#paper)" />
        <rect x="98" y="103" width="35" height="35" fill="url(#azure)" />
      </>
    ),
  },
  {
    name: "Rotate",
    art: (
      <>
        <rect x="13" y="27" width="32" height="84" fill="url(#paper)" />
        <path d="M48 40Q80 38 98 62M80 62H99V44" strokeWidth={4} />
        <path d="M119 59L139 76L79 135L60 116Z" fill="url(#azure)" strokeWidth={4} />
      </>
    ),
  },
  {
    name: "Solid tools",
    menu: true,
    art: (
      <g strokeWidth={4}>
        <path d="M22 46L70 18L133 36L88 64Z" fill="#bccaff" />
        <path d="M22 46L88 64V138L22 112Z" fill="#6583fc" />
        <path d="M88 64L133 36V106L88 138Z" fill="#2e49c4" />
        <path d="M57 93L88 101L108 90V124L88 138L57 126Z" fill="#fff" />
        <path d="M88 101V138" stroke="#bbb" />
      </g>
    ),
  },
  {
    name: "Extrude",
    menu: true,
    art: (
      <>
        <path d="M17 114L39 84H139L114 114Z" fill="url(#azure)" strokeWidth={4} />
        <path d="M46 100V42M78 100V42M109 100V42" stroke="#fff" strokeWidth={10} />
        <path d="M34 44L46 26L58 44ZM66 44L78 26L90 44ZM97 44L109 26L121 44Z" fill="#fff" stroke="none" />
      </>
    ),
  },
  {
    name: "Array",
    menu: true,
    art: (
      <>
        {[27, 67, 107].map((y, r) =>
          [22, 62, 102].map((x, c) => (
            <rect key={`${x}-${y}`} x={x} y={y} width="22" height="22" fill={r === 2 && c === 0 ? "#f2f2f2" : r + c > 2 ? "#6b87f8" : "#b2c2ff"} strokeWidth={4} />
          )),
        )}
      </>
    ),
  },
  {
    name: "Align",
    menu: true,
    art: (
      <>
        <rect x="53" y="24" width="49" height="26" fill="#fff" />
        <rect x="66" y="63" width="23" height="22" fill="#fff" />
        <rect x="57" y="99" width="41" height="34" fill="#fff" />
        <path d="M78 12V143" stroke="#d81818" strokeWidth={7} />
      </>
    ),
  },
  {
    name: "Flow along surface",
    menu: true,
    art: (
      <g strokeWidth={4}>
        <path d="M64 16L90 30L72 110L64 60Z" fill="#ddd" />
        <path d="M22 42L38 30L66 36V104L50 122L22 110Z" fill="url(#paper)" />
        <path d="M82 36L96 28L128 44Q124 84 102 114L84 136L54 122Q80 92 82 36Z" fill="url(#azure)" />
        <path d="M82 36L114 50L128 44M114 50Q112 92 84 136" strokeWidth={3} />
      </g>
    ),
  },
  { name: "Check", menu: true, art: <path d="M24 82L40 74L53 98Q80 52 128 26Q84 70 50 124Z" fill="#111" stroke="none" /> },
  {
    name: "Analyze",
    menu: true,
    art: (
      <g strokeWidth={4}>
        <path d="M22 54L52 34L90 46L62 66Z" fill="#f0f0f0" />
        <path d="M22 54L62 66V110L22 96Z" fill="#c9c9c9" />
        <path d="M62 66L90 46V92L62 110Z" fill="#8f8f8f" />
        <path d="M103 46L133 110Q103 136 76 110Z" fill="url(#paper)" />
      </g>
    ),
  },
  {
    name: "Pyramid",
    menu: true,
    art: (
      <>
        <path d="M76 54L124 104L84 136Z" fill="#c39a2c" strokeWidth={4} />
        <path d="M76 54L32 110L84 136Z" fill="#ffdf7a" strokeWidth={4} />
        <Fist x={84} y={8} k={3.6} />
      </>
    ),
  },
];

const Monitor = () => (
  <>
    <rect x="2" y="4" width="42" height="34" fill="#111" />
    <rect x="6" y="8" width="34" height="26" fill="url(#paper)" stroke="none" />
    <path d="M17 38H29L32 44H14Z" fill="#111" />
  </>
);

const HelpPage = () => (
  <>
    <rect x="2" y="2" width="42" height="42" fill="#fff" strokeWidth={2} />
    <rect x="3" y="3" width="40" height="6" fill="#2a3fb4" stroke="none" />
    <path d="M9 43Q5 12 23 12T37 43Z" fill="url(#query)" stroke="none" />
    <Question size={28} y={37} />
  </>
);

const Marker = () => (
  <>
    <path d="M3 28L8 42L22 34L16 22Z" fill="#fff" strokeWidth={2} />
    <path d="M16 22L26 8L38 12L22 34Z" fill="#e2531d" strokeWidth={2} />
    <path d="M26 8L34 1L42 3L38 12Z" fill="#777" strokeWidth={2} />
  </>
);

const Texture = () => (
  <>
    <path d="M4 24Q12 6 26 2L40 10L30 16L42 24Q30 42 18 44L6 36Z" fill="#f4f0ee" strokeWidth={2} />
    <path d="M14 12L22 16L18 24L10 20ZM28 4L36 9L29 14L23 9ZM18 24L26 28L22 36L14 32ZM6 24L12 28L12 36L6 34ZM30 20L38 24L32 30L26 28Z" fill="#e03c1c" stroke="none" />
  </>
);

const outline = "M1324 1348V727A429 429 0 0 1 1753 298A429 429 0 0 1 2182 727V1348H2366V1873H1141V1348Z";

const Scene = () => {
  const columns = Array.from({ length: 19 }, (_, i) => 147 + 175.15 * i);
  const rows = Array.from({ length: 10 }, (_, i) => 298 + 175 * i);
  return (
    <Drawing viewBox="113 218 3339 1736" preserveAspectRatio="xMinYMin slice" fill="none">
      <g stroke="#949ba2" strokeWidth={2}>
        {columns.map((x, i) => (
          <path key={x} d={`M${x} 218V1954`} stroke={i % 5 === 4 ? "#858a91" : undefined} />
        ))}
        {rows.map((y, i) => (
          <path key={y} d={`M113 ${y}H3452`} stroke={i % 5 === 4 ? "#858a91" : undefined} />
        ))}
      </g>
      <path d={outline} stroke="#ebe74a" strokeWidth={2} />
      <path d="M2366 1873H2424" stroke="#ebe74a" strokeWidth={2} />
      <path d="M160 1868V1906H199" stroke="#77797c" strokeWidth={2} />
      <g fill="#55575a" fontFamily="Open Sans, sans-serif" fontSize="19">
        <text x="164" y="1871">y</text>
        <text x="203" y="1909">x</text>
      </g>
    </Drawing>
  );
};

/* ---------- data ---------- */

const ribbon = [
  "Standard", "CPlanes", "Set View", "Display", "Select", "Viewport Layout", "Visibility", "Transform",
  "Curve Tools", "Surface Tools", "Solid Tools", "Mesh Tools", "Render Tools", "Drafting", "New in V5",
];

const filters = [
  "Points", "Curves", "Surfaces", "Polysurfaces", "Meshes", "Annotations", "Lights",
  "Blocks", "Control Points", "Point Clouds", "Hatches", "Others",
];

const snaps: [string, boolean][] = [
  ["End", true], ["Near", false], ["Point", false], ["Mid", false], ["Cen", true], ["Int", true],
  ["Perp", false], ["Tan", false], ["Quad", false], ["Knot", false], ["Vertex", false],
];

const Drop = ({ id, value }: { id: string; value: string }) => (
  <>
    <Select id={id} defaultValue={value}>
      <option>{value}</option>
    </Select>
    <DropFace>
      <svg width="18" height="10" viewBox="0 0 18 10" fill="none" stroke="#333" strokeWidth="2">
        <path d="M2 1L9 8L16 1" />
      </svg>
    </DropFace>
  </>
);

const Row = ({ label, id, off, bare, children }: { label: string; id?: string; off?: boolean; bare?: boolean; children?: ReactNode }) => (
  <tr>
    <Gutter />
    <Name scope="row" $off={off}>
      {id ? <label htmlFor={id}>{label}</label> : label}
    </Name>
    <Value $off={off}>{bare ? children : <ValueLine>{children}</ValueLine>}</Value>
  </tr>
);

const Group = ({ title, children }: { title: string; children: ReactNode }) => (
  <tbody>
    <tr>
      <GroupHead colSpan={3} scope="rowgroup">
        {title}
      </GroupHead>
    </tr>
    {children}
  </tbody>
);

const Properties = () => (
  <Panel>
    <PanelGrip $horizontal />
    <PanelTabs>
      <PanelTab $active>
        <Art size={28} box={34}>
          <Wheel cx={17} cy={17} r={11} w={5} />
        </Art>
        Properties
      </PanelTab>
      <PanelTab>
        <svg width="28" height="28" viewBox="9 8 31 31" stroke="#111" strokeWidth="2" aria-hidden>
          <LayerStack />
        </svg>
        Layers
      </PanelTab>
      <PanelTab>
        <Art size={28} box={46}>
          <Monitor />
        </Art>
        Display
      </PanelTab>
      <PanelTab>
        <Art size={28} box={46}>
          <HelpPage />
        </Art>
        Help
      </PanelTab>
    </PanelTabs>
    <PanelBody>
      <PageButtons>
        <PageButton $on aria-label="Object">
          <Art size={28} box={34}>
            <Wheel cx={17} cy={17} r={12} w={5} />
          </Art>
        </PageButton>
        <PageButton aria-label="Material">
          <Art size={27} box={46}>
            <Marker />
          </Art>
        </PageButton>
        <PageButton aria-label="Texture mapping">
          <Art size={27} box={46}>
            <Texture />
          </Art>
        </PageButton>
      </PageButtons>
      <Sheet>
        <Table>
          <colgroup>
            <col width="22" />
            <col width="303" />
            <col />
          </colgroup>
          <Group title="Object">
            <Row label="Type">closed curve</Row>
            <Row label="Name" id="name">
              <TextBox id="name" />
            </Row>
            <Row label="Layer" id="layer">
              <Swatch />
              <Drop id="layer" value="0" />
            </Row>
            <Row label="Display Color" id="display-color">
              <Swatch />
              <Drop id="display-color" value="By Layer" />
            </Row>
            <Row label="Linetype" id="linetype">
              <Drop id="linetype" value="By Layer" />
            </Row>
            <Row label="Print Color" id="print-color">
              <svg width="32" height="32" viewBox="0 0 32 32" fill="#fff" stroke="#333" strokeWidth="2">
                <path d="M16 1L30 16L16 31L2 16Z" />
              </svg>
              <Drop id="print-color" value="By Layer" />
            </Row>
            <Row label="Print Width" id="print-width">
              <Drop id="print-width" value="By Layer" />
            </Row>
            <Row label="Hyperlink" id="hyperlink">
              <TextBox id="hyperlink" />
              <MoreButton>...</MoreButton>
            </Row>
          </Group>
          <Group title="Render Mesh Settings">
            <Row label="Custom Mesh" id="custom-mesh" off>
              <SmallCheck type="checkbox" id="custom-mesh" disabled />
            </Row>
            <Row label="Settings" off bare>
              <AdjustButton disabled>Adjust...</AdjustButton>
            </Row>
          </Group>
          <Group title="Rendering">
            <Row label="Casts shadows" id="casts">
              <SmallCheck type="checkbox" id="casts" defaultChecked />
            </Row>
            <Row label="Receives shadows" id="receives">
              <SmallCheck type="checkbox" id="receives" defaultChecked />
            </Row>
          </Group>
          <Group title="Isocurve Density">
            <Row label="Density" off>
              <Stepper>
                <Step aria-label="Increase" disabled>
                  <svg width="16" height="9" viewBox="0 0 16 9" fill="#555"><path d="M8 0L15 9H1Z" /></svg>
                </Step>
                <Step aria-label="Decrease" disabled>
                  <svg width="16" height="9" viewBox="0 0 16 9" fill="#555"><path d="M8 9L15 0H1Z" /></svg>
                </Step>
              </Stepper>
            </Row>
            <Row label="Show surface isocurve" off>
              <SmallCheck type="checkbox" id="visible" disabled />
              <label htmlFor="visible">Visible</label>
            </Row>
          </Group>
        </Table>
        <ButtonStack>
          <WideButton><u>M</u>atch</WideButton>
          <WideButton><u>D</u>etails...</WideButton>
        </ButtonStack>
      </Sheet>
    </PanelBody>
  </Panel>
);

export default function App() {
  return (
    <Page>
      <Global />
      <Gradients />
      <CommandDock>
        <Grip />
        <CommandBody>
          <HistoryRow>
            <History>
              File "C:\Users\Joris Lam\Google Drive\01_Study\02_Fab_Academy\03_computer_controlled_cutting\insert6.dxf" imported successfully.
            </History>
            <ScrollTrack>
              <svg width="18" height="44" viewBox="0 0 18 44" fill="none" stroke="#444" strokeWidth="4">
                <path d="M0 9L9 2L18 9M0 34L9 42L18 34" />
              </svg>
            </ScrollTrack>
          </HistoryRow>
          <PromptRow>
            <PromptLabel htmlFor="command">Command:</PromptLabel>
            <Caret />
            <PromptInput id="command" />
            <PromptSpin>
              <SpinHalf aria-label="Scroll up" />
              <SpinHalf aria-label="Scroll down" />
            </PromptSpin>
          </PromptRow>
        </CommandBody>
      </CommandDock>

      <RibbonDock>
        <RibbonGrip />
        <RibbonBody>
          <RibbonTabs>
            {ribbon.map((name, i) => (
              <RibbonTab key={name} $active={i === 0}>
                {name}
              </RibbonTab>
            ))}
          </RibbonTabs>
          <ToolStrip>
            <StripGrid>
              {stripTools.map((t) => (
                <ToolButton key={t.name} aria-label={t.name}>
                  <Art size={46} box={46} menu={t.menu}>
                    {t.art}
                  </Art>
                </ToolButton>
              ))}
            </StripGrid>
          </ToolStrip>
        </RibbonBody>
      </RibbonDock>

      <Middle>
        <SideTools>
          <Grip $horizontal />
          <SideGrid>
            {sideTools.map((t) => (
              <ToolButton key={t.name} aria-label={t.name}>
                <Art size={46} box={158} menu={t.menu}>
                  {t.art}
                </Art>
              </ToolButton>
            ))}
          </SideGrid>
        </SideTools>

        <ViewColumn>
          <Viewport>
            <Scene />
            <ViewTitle>
              Top
              <i />
              <svg width="10" height="6" viewBox="0 0 10 6">
                <path d="M0 0H10L5 6Z" />
              </svg>
            </ViewTitle>
            <FilterWindow>
              <FilterTitle>
                <h2>Selection F...</h2>
                <svg width="18" height="16" viewBox="0 0 18 16">
                  <ellipse cx="9" cy="8" rx="9" ry="8" fill="#dfe3ea" />
                  <path d="M5 4L13 12M13 4L5 12" stroke="#a9afbd" strokeWidth="3" />
                </svg>
              </FilterTitle>
              <FilterList>
                {filters.map((name) => (
                  <CheckLabel key={name}>
                    <BoldCheck type="checkbox" defaultChecked />
                    {name}
                  </CheckLabel>
                ))}
                <CheckLabel>
                  <BoldCheck type="checkbox" $flat />
                  Disable
                </CheckLabel>
              </FilterList>
            </FilterWindow>
          </Viewport>
          <ViewTabs>
            {["Perspective", "Top", "Front", "Right"].map((name, i) => (
              <ViewTab key={name} $active={name === "Top"} $order={9 - i}>
                {name}
              </ViewTab>
            ))}
            <ViewTab $plain $order={1} aria-label="New viewport tab">
              <svg width="34" height="14" viewBox="0 0 34 14" fill="#fff" stroke="#777" strokeWidth="2">
                <path d="M14 1H18V5H22V9H18V13H14V9H10V5H14Z" />
              </svg>
            </ViewTab>
          </ViewTabs>
        </ViewColumn>

        <Properties />
      </Middle>

      <SnapBar>
        <Grip />
        <SnapList>
          {snaps.map(([name, on]) => (
            <CheckLabel key={name}>
              <BoldCheck type="checkbox" defaultChecked={on} />
              {name}
            </CheckLabel>
          ))}
          <CheckLabel>
            <BoldCheck type="checkbox" $flat />
            Project
          </CheckLabel>
          <CheckLabel>
            <BoldCheck type="checkbox" $flat />
            Disable
          </CheckLabel>
        </SnapList>
      </SnapBar>
    </Page>
  );
}
